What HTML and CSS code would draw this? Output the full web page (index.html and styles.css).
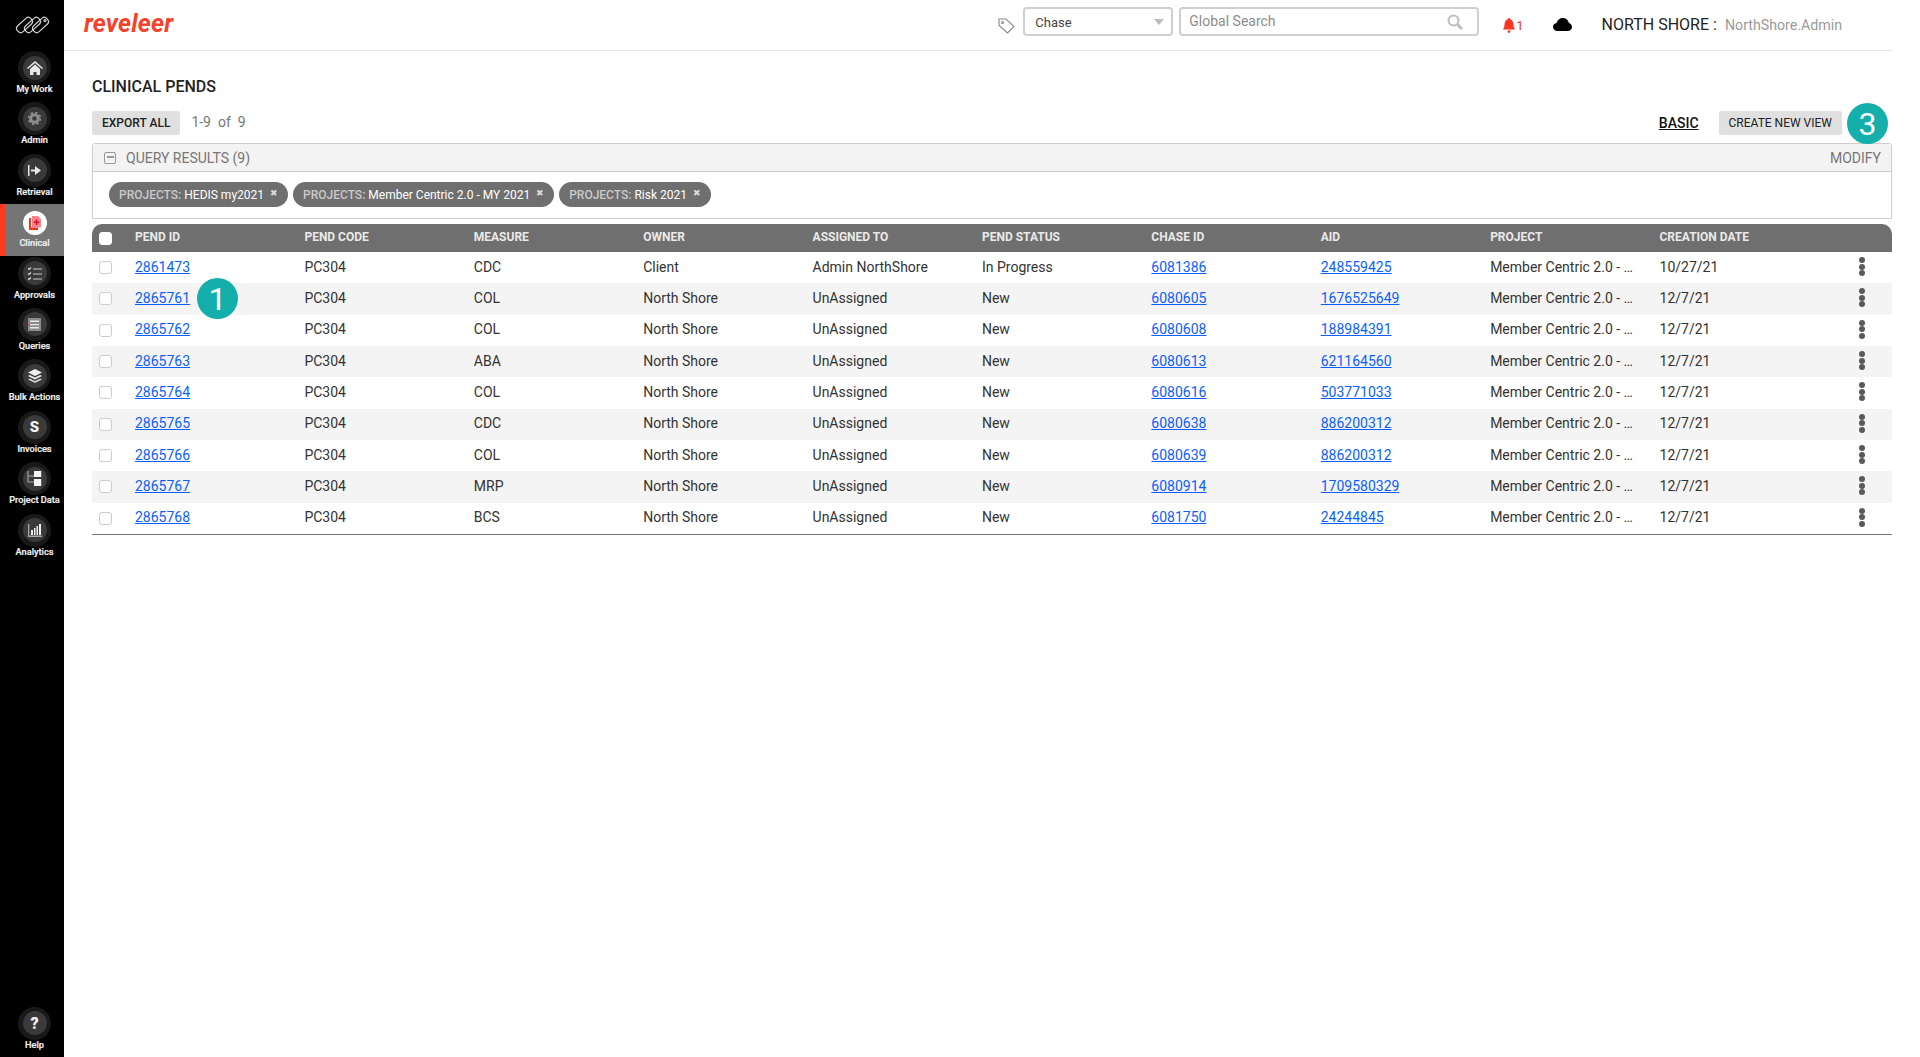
FILE: index.html
```html
<!DOCTYPE html>
<html lang="en">
<head>
<meta charset="utf-8">
<title>Clinical Pends</title>
<link rel="stylesheet" href="styles.css">
</head>
<body>
<div class="app">
  <nav class="sidebar">
    <div class="brand">
      <svg width="37" height="18" viewBox="0 0 37 18" fill="none" stroke="#d4d4d4" stroke-width="1.200"><rect x="1.500" y="5" width="18" height="8" rx="3.500" transform="rotate(-42 10.500 9)"/><rect x="9.500" y="5" width="18" height="8" rx="3.500" transform="rotate(-42 18.500 9)"/><rect x="17.500" y="5" width="18" height="8" rx="3.500" transform="rotate(-42 26.500 9)"/><circle cx="31" cy="4.500" r="1" /></svg>
    </div>
    <a class="nav-item"><span class="ring"><span class="disc"><svg width="16" height="14" viewBox="0 0 16 14"><path fill="#e8e8e8" d="M8 0 0 7l1 1 7-6 7 6 1-1Z"/><path fill="#e8e8e8" d="M3 8l5-4.500L13 8v6H9.500v-3h-3v3H3Z"/></svg></span></span><span class="nav-label">My Work</span></a>
    <a class="nav-item"><span class="ring"><span class="disc"><svg width="13" height="13" viewBox="0 0 13 13"><circle cx="6.500" cy="6.500" r="3.800" fill="none" stroke="#8f8f8f" stroke-width="3"/><circle cx="6.500" cy="6.500" r="6" fill="none" stroke="#8f8f8f" stroke-width="1.500" stroke-dasharray="2.400 2.300"/></svg></span></span><span class="nav-label">Admin</span></a>
    <a class="nav-item"><span class="ring"><span class="disc"><svg width="13" height="11" viewBox="0 0 13 11"><path fill="#e8e8e8" d="M0 0h1.500v11H0ZM3 4.500h4V1l6 4.500L7 10V6.500H3Z"/></svg></span></span><span class="nav-label">Retrieval</span></a>
    <a class="nav-item active"><span class="ring"><span class="disc"><svg width="12" height="14" viewBox="0 0 12 14"><path fill="#f4331f" d="M0 2h2v9.500h7V14H0Z"/><path fill="#f9838b" d="M3 0h6l3 3v8.500H3Z"/><path fill="#d2112b" d="M6.800 3.500h1.500v2h2V7h-2v2H6.800V7h-2V5.500h2Z"/></svg></span></span><span class="nav-label">Clinical</span></a>
    <a class="nav-item"><span class="ring"><span class="disc"><svg width="14" height="13" viewBox="0 0 14 13" fill="none" stroke="#d8d8d8"><path stroke-width="1.200" d="m0 1.500 1 1 2-2M0 6.500l1 1 2-2M0 11.500l1 1 2-2"/><path stroke="#9a9a9a" stroke-width="1.600" d="M5 2h9M5 7h9M5 12h9"/></svg></span></span><span class="nav-label">Approvals</span></a>
    <a class="nav-item"><span class="ring"><span class="disc"><svg width="13" height="13" viewBox="0 0 13 13"><path fill="#8b8b8b" d="M0 0h13v13H0Z"/><path fill="#e8e8e8" d="M2 2.500h9V4H2ZM2 6h9v1.300H2ZM2 9h9v1.500H2Z"/><path fill="#e53935" d="M0 6h2v1.300H0Z"/></svg></span></span><span class="nav-label">Queries</span></a>
    <a class="nav-item"><span class="ring"><span class="disc"><svg width="14" height="14" viewBox="0 0 14 14"><path fill="#f0f0f0" d="M7 0l7 3.500L7 7 0 3.500Z"/><path fill="#f0f0f0" d="M1.800 6 7 8.600 12.200 6 14 7l-7 3.500L0 7Z"/><path fill="#d0d0d0" d="M1.800 9.500 7 12.100l5.200-2.600 1.800 1L7 14l-7-3.500Z"/></svg></span></span><span class="nav-label">Bulk Actions</span></a>
    <a class="nav-item"><span class="ring"><span class="disc dollar">S</span></span><span class="nav-label">Invoices</span></a>
    <a class="nav-item"><span class="ring"><span class="disc"><svg width="15" height="15" viewBox="0 0 15 15"><path fill="none" stroke="#8a8a8a" stroke-width="1.500" d="M1 0v11h6M1 5h6"/><path fill="#f4f4f4" d="M7 0h8v6H7ZM7 8h8v7H7Z"/><path fill="#d9342b" d="M14 0h1v6h-1ZM14 8h1v7h-1Z"/></svg></span></span><span class="nav-label">Project Data</span></a>
    <a class="nav-item"><span class="ring"><span class="disc"><svg width="14" height="13" viewBox="0 0 14 13"><path fill="#a8a8a8" d="M0 0h1.300v11.500H14V13H0Z"/><path fill="#f0f0f0" d="M3 6h2v5H3ZM6 4h1.500v7H6ZM8.500 2H10v9H8.500ZM11 0h2v11h-2Z"/></svg></span></span><span class="nav-label">Analytics</span></a>
    <a class="nav-item help"><span class="ring"><span class="disc qmark">?</span></span><span class="nav-label">Help</span></a>
  </nav>

  <div class="page">
    <header class="topbar">
      <span class="wordmark">reveleer</span>
      <div class="top-tools">
        <svg class="tag" width="17" height="16" viewBox="0 0 17 16" fill="none" stroke="#8a8a8a" stroke-width="1.100"><path d="M1 1h7l8 7.500-6.500 6.500L1 7.500Z"/><circle cx="4.500" cy="4.500" r="1"/></svg>
        <div class="select"><span>Chase</span><i class="caret"></i></div>
        <div class="search"><span>Global Search</span>
          <svg width="16" height="16" viewBox="0 0 16 16" fill="none" stroke="#bdbdbd"><circle cx="6.500" cy="6.500" r="5" stroke-width="2"/><path stroke-width="3" d="m10.500 10.500 4.500 4.500"/></svg>
        </div>
        <div class="alert">
          <svg width="12" height="15" viewBox="0 0 12 15"><path fill="#fb3421" d="M6 0c.8 0 1.200.6 1.200 1.300C9.500 2 10.300 4 10.500 6.500c.1 2 .5 3.500 1.500 5H0c1-1.500 1.400-3 1.500-5C1.700 4 2.500 2 4.800 1.300 4.800.6 5.200 0 6 0ZM4.500 12.500h3C7.500 14 6.800 15 6 15s-1.500-1-1.500-2.500Z"/></svg>
          <span>1</span>
        </div>
        <svg class="cloud" width="19" height="13" viewBox="0 0 19 13"><path d="M4.500 13C2 13 0 11.200 0 9c0-2 1.500-3.600 3.500-3.900C4.200 2 6.800 0 9.800 0c3 0 5.400 2 6 4.700C17.700 5.400 19 7 19 9c0 2.200-1.800 4-4.200 4Z"/></svg>
        <div class="user"><span class="org">NORTH SHORE :</span><span class="uname">NorthShore.Admin</span></div>
      </div>
    </header>

    <main class="content">
      <h1 class="title">CLINICAL PENDS</h1>
      <div class="actions">
        <button class="btn">EXPORT ALL</button>
        <span class="count">1-9&nbsp; of&nbsp; 9</span>
        <a class="basic">BASIC</a>
        <button class="btn">CREATE NEW VIEW</button>
        <span class="callout callout-three">3</span>
      </div>

      <section class="query">
        <div class="query-head">
          <span class="minus"></span>
          <span class="query-title">QUERY RESULTS (9)</span>
          <span class="modify">MODIFY</span>
        </div>
        <div class="chips">
          <span class="chip"><b>PROJECTS:</b> HEDIS my2021 <i>✖</i></span>
          <span class="chip"><b>PROJECTS:</b> Member Centric 2.0 - MY 2021 <i>✖</i></span>
          <span class="chip"><b>PROJECTS:</b> Risk 2021 <i>✖</i></span>
        </div>
      </section>

      <div class="grid">
        <div class="row head">
          <span class="check-cell"><span class="box solid"></span></span><span>PEND ID</span><span>PEND CODE</span><span>MEASURE</span><span>OWNER</span><span>ASSIGNED TO</span><span>PEND STATUS</span><span>CHASE ID</span><span>AID</span><span>PROJECT</span><span>CREATION DATE</span><span></span>
        </div>
        <div class="row">
          <span class="check-cell"><span class="box"></span></span><a>2861473</a><span>PC304</span><span>CDC</span><span>Client</span><span>Admin NorthShore</span><span>In Progress</span><a>6081386</a><a>248559425</a><span>Member Centric 2.0 - …</span><span>10/27/21</span><span class="dots"><i></i><i></i><i></i></span>
        </div>
        <div class="row">
          <span class="check-cell"><span class="box"></span></span><a>2865761</a><span>PC304</span><span>COL</span><span>North Shore</span><span>UnAssigned</span><span>New</span><a>6080605</a><a>1676525649</a><span>Member Centric 2.0 - …</span><span>12/7/21</span><span class="dots"><i></i><i></i><i></i></span>
          <span class="callout callout-one">1</span>
        </div>
        <div class="row">
          <span class="check-cell"><span class="box"></span></span><a>2865762</a><span>PC304</span><span>COL</span><span>North Shore</span><span>UnAssigned</span><span>New</span><a>6080608</a><a>188984391</a><span>Member Centric 2.0 - …</span><span>12/7/21</span><span class="dots"><i></i><i></i><i></i></span>
        </div>
        <div class="row">
          <span class="check-cell"><span class="box"></span></span><a>2865763</a><span>PC304</span><span>ABA</span><span>North Shore</span><span>UnAssigned</span><span>New</span><a>6080613</a><a>621164560</a><span>Member Centric 2.0 - …</span><span>12/7/21</span><span class="dots"><i></i><i></i><i></i></span>
        </div>
        <div class="row">
          <span class="check-cell"><span class="box"></span></span><a>2865764</a><span>PC304</span><span>COL</span><span>North Shore</span><span>UnAssigned</span><span>New</span><a>6080616</a><a>503771033</a><span>Member Centric 2.0 - …</span><span>12/7/21</span><span class="dots"><i></i><i></i><i></i></span>
        </div>
        <div class="row">
          <span class="check-cell"><span class="box"></span></span><a>2865765</a><span>PC304</span><span>CDC</span><span>North Shore</span><span>UnAssigned</span><span>New</span><a>6080638</a><a>886200312</a><span>Member Centric 2.0 - …</span><span>12/7/21</span><span class="dots"><i></i><i></i><i></i></span>
        </div>
        <div class="row">
          <span class="check-cell"><span class="box"></span></span><a>2865766</a><span>PC304</span><span>COL</span><span>North Shore</span><span>UnAssigned</span><span>New</span><a>6080639</a><a>886200312</a><span>Member Centric 2.0 - …</span><span>12/7/21</span><span class="dots"><i></i><i></i><i></i></span>
        </div>
        <div class="row">
          <span class="check-cell"><span class="box"></span></span><a>2865767</a><span>PC304</span><span>MRP</span><span>North Shore</span><span>UnAssigned</span><span>New</span><a>6080914</a><a>1709580329</a><span>Member Centric 2.0 - …</span><span>12/7/21</span><span class="dots"><i></i><i></i><i></i></span>
        </div>
        <div class="row">
          <span class="check-cell"><span class="box"></span></span><a>2865768</a><span>PC304</span><span>BCS</span><span>North Shore</span><span>UnAssigned</span><span>New</span><a>6081750</a><a>24244845</a><span>Member Centric 2.0 - …</span><span>12/7/21</span><span class="dots"><i></i><i></i><i></i></span>
        </div>
      </div>
    </main>
  </div>
</div>
</body>
</html>
```
FILE: styles.css
```css
* { box-sizing: border-box; }
html, body { margin: 0; height: 100%; overflow: hidden; background: #fff; }
body { font-family: Roboto, "Liberation Sans", sans-serif; font-size: 14px; color: #333; }
.app { display: flex; height: 1057px; }

.sidebar { width: 64px; flex: none; background: #000; display: flex; flex-direction: column; }
.brand { height: 50px; display: flex; justify-content: center; padding-top: 16px; flex: none; }
.nav-item { height: 51.400px; flex: none; display: flex; flex-direction: column; align-items: center; padding-top: 1px; border-left: 5px solid transparent; }
.ring { width: 33px; height: 33px; border-radius: 50%; background: #191919; display: flex; align-items: center; justify-content: center; }
.disc { width: 24px; height: 24px; border-radius: 50%; background: #3a3a3a; display: flex; align-items: center; justify-content: center; }
.nav-label { font-size: 9.200px; font-weight: 500; line-height: 11px; margin-top: -1px; color: #f2f2f2; white-space: nowrap; -webkit-text-stroke: .2px #f2f2f2; }
.active { background: #757575; border-left-color: #fb3a20; }
.active .ring { background: transparent; margin-top: 1px; }
.active .disc { background: #fff; }
.active .nav-label { margin-top: -2px; }
.dollar { font-size: 15px; font-weight: 900; color: #f2f2f2; }
.qmark { font-size: 16px; font-weight: 900; color: #f2f2f2; }
.help { margin-top: auto; height: 50px; margin-bottom: 1.500px; }

.page { flex: 1; min-width: 0; padding-right: 28px; display: flex; flex-direction: column; }
.topbar { height: 51px; flex: none; display: flex; align-items: center; padding-left: 20px; border-bottom: 1px solid #e3e3e3; }
.wordmark { font-size: 24.800px; font-weight: 700; font-style: italic; color: #f4432b; letter-spacing: .2px; line-height: 1; margin-top: -2px; }
.top-tools { margin-left: auto; display: flex; align-items: center; height: 100%; padding-right: 50px; }
.tag { margin-right: 8px; margin-top: 1px; }
.select, .search { height: 29px; border: 2px solid #cfcfcf; border-radius: 4px; display: flex; align-items: center; justify-content: space-between; margin-top: -7px; }
.select { width: 150px; padding: 0 7px 0 10px; font-size: 13px; color: #444; margin-right: 6px; }
.select span { margin-top: 1px; }
.caret { width: 0; height: 0; border-left: 5px solid transparent; border-right: 5px solid transparent; border-top: 6px solid #bdbdbd; }
.search { width: 300px; padding: 0 14px 0 8px; font-size: 14px; color: #8d8d8d; }
.search span { margin-top: -2px; }
.alert { display: flex; align-items: center; gap: 1px; margin-left: 24px; font-size: 13px; color: #fb3421; }
.cloud { margin-left: 29px; margin-top: -1px; }
.user { display: flex; align-items: baseline; margin-left: 30px; margin-top: -2px; }
.org { font-size: 16px; color: #222; }
.uname { font-size: 14.200px; color: #9a9a9a; margin-left: 8px; }

.content { padding-left: 28px; flex: 1; }
.title { margin: 0; padding-top: 26px; font-size: 16px; line-height: 19px; font-weight: 500; color: #222; }
.actions { display: flex; align-items: center; margin-top: 15px; height: 24px; position: relative; }
.btn { height: 24px; border: 0; border-radius: 2px; background: #e0e0e0; padding: 0 10px; font: 500 12px Roboto, sans-serif; color: #222; }
.count { margin-left: 11px; font-size: 14px; color: #777; margin-top: -2px; }
.basic { margin-left: auto; margin-right: 20px; font-size: 14px; font-weight: 500; color: #111; text-decoration: underline; margin-top: -1px; }
.actions .btn:last-of-type { margin-right: 50px; font-weight: 400; }
.callout { position: absolute; border-radius: 50%; background: #14aeab; color: #fff; display: flex; align-items: center; justify-content: center; width: 41px; height: 41px; font-size: 32px; font-weight: 400; line-height: 1; }
.callout-three { right: 4px; top: -8px; }
.callout-one { left: 105px; top: -5px; }

.query { margin-top: 8px; border: 1px solid #ccc; border-radius: 3px 3px 0 0; height: 76px; }
.query-head { height: 28px; background: #f3f3f3; border-bottom: 1px solid #ccc; display: flex; align-items: center; padding: 0 10px 0 11px; color: #777; font-size: 14px; }
.minus { width: 12px; height: 12px; border: 1.500px solid #999; border-radius: 2px; margin-right: 10px; position: relative; }
.minus::after { content: ""; position: absolute; left: 1.500px; right: 1.500px; top: 3.500px; height: 2px; background: #999; }
.modify { margin-left: auto; }
.chips { display: flex; gap: 5px; padding: 10px 0 0 16px; }
.chip { height: 25px; border-radius: 13px; background: #6f6f6f; color: #fff; font-size: 12px; font-weight: 400; display: flex; align-items: center; gap: 3px; padding: 0 10px; white-space: nowrap; }
.chip b { font-weight: 500; color: #c9c9c9; }
.chip i { font-style: normal; font-size: 9px; color: #ddd; margin-left: 3px; margin-top: -3px; }

.grid { margin-top: 5px; border-bottom: 1px solid #777; }
.row { display: grid; grid-template-columns: 43px repeat(10, 169.400px) 1fr; align-items: center; height: 31.330px; position: relative; }
.row:nth-child(odd) { background: #f4f4f4; }
.row > span, .row > a { white-space: nowrap; margin-top: -2px; }
.row > .check-cell { margin-top: 0; }
.row a { color: #0b5fff; text-decoration: underline; justify-self: start; }
.head, .row.head:nth-child(odd) { height: 28px; background: #6f6f6f; color: #eaeaea; font-size: 12px; font-weight: 700; border-radius: 10px 10px 0 0; }
.check-cell { padding-left: 7px; display: flex; }
.box { width: 13px; height: 13px; border: 1px solid #ccc; border-radius: 3px; background: #fff; }
.solid { border-color: #fff; }
.row > .callout { margin-top: 0; }
.dots { display: flex; flex-direction: column; gap: .5px; align-items: center; padding-left: 3px; }
.dots i { width: 6px; height: 6px; border-radius: 50%; background: #5a5a5a; }
```
